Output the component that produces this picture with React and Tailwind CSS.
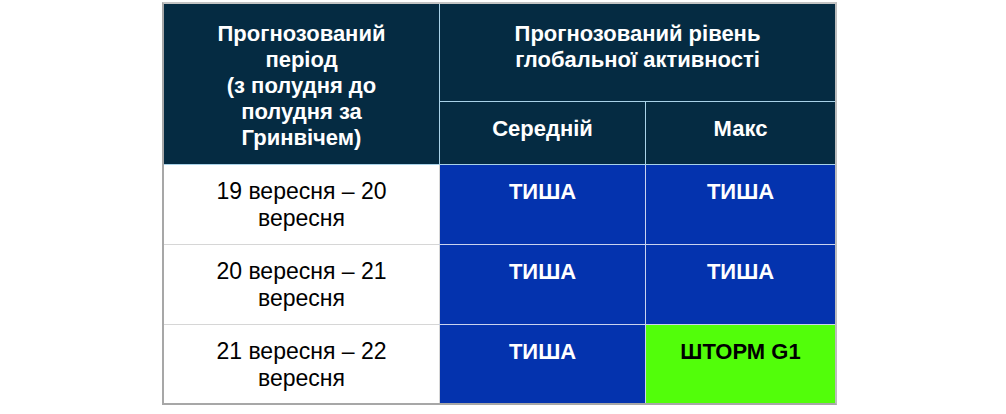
import React from "react";

const NAVY = "bg-[#052b42]";
const sans = { fontFamily: "'Liberation Sans', Arial, sans-serif" };

function HeadCell({ children, className = "" }) {
  return (
    <div
      className={`${NAVY} text-white font-bold text-[22px] leading-[26px] text-center ${className}`}
      style={sans}
    >
      {children}
    </div>
  );
}

function Row({ period, avg, max, h }) {
  const cell = "leading-[27px] text-center pt-[13px]";
  const storm = max === "ШТОРМ G1";
  return (
    <div className={`flex ${h}`}>
      <div className={`w-[275px] bg-white text-black text-[23px] ${cell}`} style={sans}>
        {period[0]}
        <br />
        {period[1]}
      </div>
      <div className="w-px bg-[#d6d6d6]" />
      <div className={`w-[205px] bg-[#0433ae] text-white font-bold text-[22px] ${cell}`} style={sans}>
        {avg}
      </div>
      <div className="w-px bg-[#c9d3ee]" />
      <div
        className={`w-[189px] font-bold text-[22px] ${cell} ${
          storm ? "bg-[#52fe0a] text-black" : "bg-[#0433ae] text-white"
        }`}
        style={sans}
      >
        {max}
      </div>
    </div>
  );
}

function Sep() {
  return (
    <div className="flex h-px">
      <div className="w-[275px] bg-[#d6d6d6]" />
      <div className="flex-1 bg-[#c9d3ee]" />
    </div>
  );
}

export default function App() {
  return (
    <div className="w-[1006px] h-[414px] bg-white">
      <div className="ml-[162px] pt-[2px]">
        <div className="w-[675px] border-2 border-[#a7a7a7] border-t-[#c4c4c4] border-r-[#bdbdbd] flex flex-col">
          <div className="flex h-[160px]">
            <HeadCell className="w-[275px] pt-[17px]">
              Прогнозований
              <br />
              період
              <br />
              (з полудня до
              <br />
              полудня за
              <br />
              Гринвічем)
            </HeadCell>
            <div className="w-px bg-[#a9d2e8]" />
            <div className="flex flex-col w-[395px]">
              <HeadCell className="h-[97px] pt-[17px]">
                Прогнозований рівень
                <br />
                глобальної активності
              </HeadCell>
              <div className="h-px bg-[#a9d2e8]" />
              <div className="flex h-[62px]">
                <HeadCell className="w-[205px] pt-[14px]">Середній</HeadCell>
                <div className="w-px bg-[#a9d2e8]" />
                <HeadCell className="w-[189px] pt-[14px]">Макс</HeadCell>
              </div>
            </div>
          </div>
          <div className="h-px bg-[#a9d2e8]" />
          <Row period={["19 вересня – 20", "вересня"]} avg="ТИША" max="ТИША" h="h-[79px]" />
          <Sep />
          <Row period={["20 вересня – 21", "вересня"]} avg="ТИША" max="ТИША" h="h-[79px]" />
          <Sep />
          <Row period={["21 вересня – 22", "вересня"]} avg="ТИША" max="ШТОРМ G1" h="h-[78px]" />
        </div>
      </div>
    </div>
  );
}
